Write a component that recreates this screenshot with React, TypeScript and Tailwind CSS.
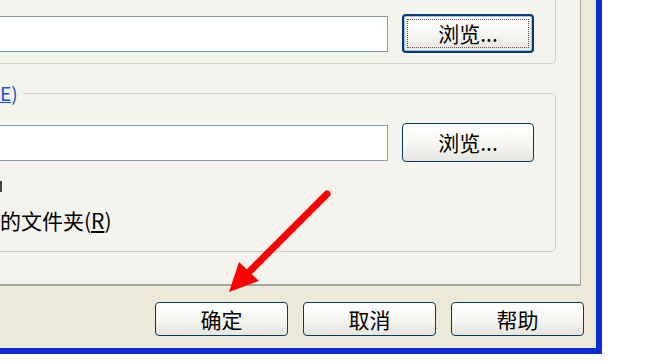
const font = { fontFamily: '"Noto Sans CJK SC", "Liberation Sans", sans-serif' }

function XpButton({ label, focused }: { label: string; focused?: boolean }) {
  return (
    <button
      type="button"
      className={
        'relative flex items-center justify-center rounded-[4px] border bg-gradient-to-b from-white via-[#f7f7f4] to-[#e6e5de] text-[21px] leading-none text-black ' +
        (focused ? 'border-[#003c74] border-2 shadow-[inset_0_0_0_1px_#a9c0ea]' : 'border-[#003c74]')
      }
    >
      {focused && <span className="absolute inset-[3px] border border-dotted border-[#7a4a4a]" />}
      {label}
    </button>
  )
}

export default function App() {
  return (
    <div className="w-[650px] h-[361px] bg-white overflow-hidden relative" style={font}>
      <div className="w-[602px] h-[354px] bg-[#ece9d8] border-r-[6px] border-b-[6px] border-[#0a2dd6] flex flex-col">
        {/* tab page */}
        <div className="w-[581px] h-[286px] bg-[#f4f3ee] border-r border-b-2 border-[#a3a69c] overflow-hidden flex flex-col">
          {/* group 1 */}
          <div className="w-[556px] h-[64px] border-r border-b border-[#d0d0bf] rounded-br-[5px] flex">
            <div className="flex items-center h-[39px] mt-[14px]">
              <input
                readOnly
                className="ml-[-4px] w-[392px] h-[36px] bg-white border border-[#7f9db9] outline-none"
              />
              <div className="ml-[14px] w-[132px] h-[39px] grid">
                <XpButton label="浏览..." focused />
              </div>
            </div>
          </div>

          {/* group 2 */}
          <div className="relative mt-[29px] w-[556px] h-[159px] border-t border-r border-b border-[#d0d0bf] rounded-tr-[5px] rounded-br-[5px] flex flex-col">
            <span className="absolute left-0 top-[-13px] bg-[#f4f3ee] pr-[5px] text-[19px] leading-[24px] text-[#1450e0]">
              <u>E</u>)
            </span>
            <div className="flex items-center h-[39px] mt-[29px]">
              <input
                readOnly
                className="ml-[-4px] w-[392px] h-[36px] bg-white border border-[#7f9db9] outline-none"
              />
              <div className="ml-[14px] w-[132px] h-[39px] grid">
                <XpButton label="浏览..." />
              </div>
            </div>
            <div className="mt-[12px] h-[24px] flex items-center">
              <span className="w-[2px] h-[11px] bg-[#444]" />
            </div>
            <div className="mt-[10px] h-[24px] text-[21px] leading-[24px] text-black">
              的文件夹(<u>R</u>)
            </div>
          </div>
        </div>

        {/* dialog buttons */}
        <div className="mt-[16px] pl-[155px] flex gap-[15px]">
          <div className="w-[133px] h-[34px] grid">
            <XpButton label="确定" />
          </div>
          <div className="w-[133px] h-[34px] grid">
            <XpButton label="取消" />
          </div>
          <div className="w-[133px] h-[34px] grid">
            <XpButton label="帮助" />
          </div>
        </div>
      </div>

      {/* red annotation arrow */}
      <svg className="absolute left-0 top-0 pointer-events-none" width="650" height="361">
        <line x1="327" y1="194" x2="247" y2="274" stroke="#ff0000" strokeWidth="7" strokeLinecap="round" />
        <polygon points="229,292 239,262 259,281" fill="#ff0000" />
      </svg>
    </div>
  )
}
